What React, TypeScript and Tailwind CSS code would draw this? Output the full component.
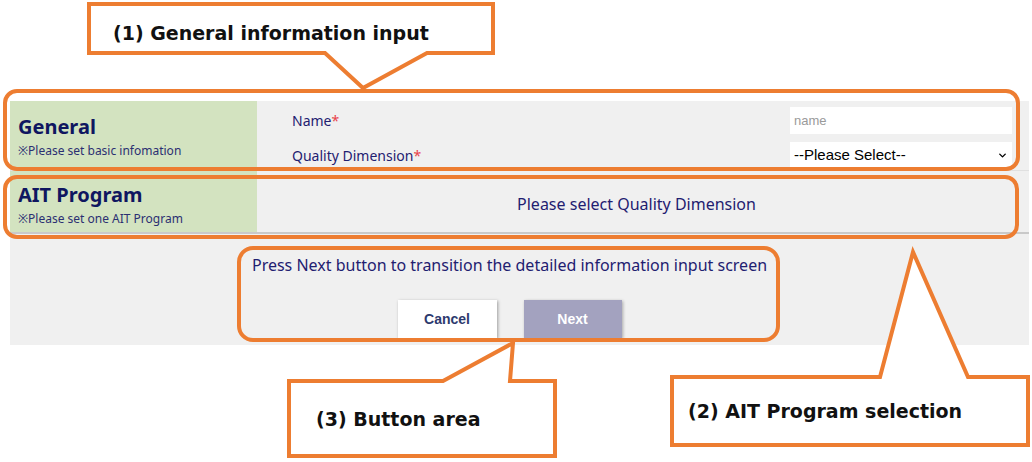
import { ChevronDown } from "lucide-react";

const orange = "#ed7d31";

function Callouts() {
  return (
    <>
      <svg className="pointer-events-none absolute left-0 top-0" width={1032} height={462} viewBox="0 0 1032 462">
        <g fill="none" stroke={orange} strokeWidth={4} strokeLinejoin="miter">
          <rect x={5} y={91} width={1013} height={78} rx={12} />
          <rect x={5} y={177} width={1012} height={60} rx={12} />
          <rect x={239} y={248} width={539} height={92} rx={14} />
        </g>
        <g fill="#ffffff" stroke={orange} strokeWidth={4}>
          <path d="M89 4 H493 V53 H427 L363 88 L325 53 H89 Z" />
          <path d="M289 381 H443 L513 343 L510 381 H555 V456 H289 Z" />
          <path d="M672 377 H880 L913 252 L968 377 H1028 V445 H672 Z" />
        </g>
      </svg>
      <p className="absolute left-[113px] top-[21px] font-['DejaVu_Sans',sans-serif] text-[19px] font-bold leading-[24px] text-[#111111]">
        (1) General information input
      </p>
      <p className="absolute left-[688px] top-[399px] font-['DejaVu_Sans',sans-serif] text-[19px] font-bold leading-[24px] text-[#111111]">
        (2) AIT Program selection
      </p>
      <p className="absolute left-[316px] top-[407px] font-['DejaVu_Sans',sans-serif] text-[19px] font-bold leading-[24px] text-[#111111]">
        (3) Button area
      </p>
    </>
  );
}

function SideLabel({ title, note, pad }: { title: string; note: string; pad: string }) {
  return (
    <div className={`flex w-[247px] shrink-0 flex-col bg-[#d3e3c0] px-2 ${pad}`}>
      <h2 className="text-[20px] font-bold leading-[26px] text-[#0f1660]">{title}</h2>
      <p className="mt-[2px] text-[12px] leading-[18px] text-[#2b2f72]">{note}</p>
    </div>
  );
}

export default function App() {
  return (
    <div className="relative h-[462px] w-[1032px] overflow-hidden bg-white font-['Noto_Sans',sans-serif]">
      <div className="ml-[10px] mt-[101px] w-[1019px] bg-[#f0f0f0] text-[#1f2070]">
        <section className="flex h-[70px] border-b border-[#e0e0e0]">
          <SideLabel title="General" note="※Please set basic infomation" pad="pt-[13px]" />
          <div className="grid flex-1 grid-cols-[1fr_222px] content-start gap-y-[8px] pl-[35px] pr-[17px] pt-[6px]">
            <label className="flex h-[27px] items-center text-[14px]">
              Name<span className="text-[#e8424a]">*</span>
            </label>
            <input
              placeholder="name"
              className="h-[27px] bg-white px-1 font-['Liberation_Sans',sans-serif] text-[13px] text-black outline-none placeholder:text-[#9a9a9a]"
            />
            <label className="flex h-[26px] items-center text-[14px]">
              Quality Dimension<span className="text-[#e8424a]">*</span>
            </label>
            <div className="relative h-[26px]">
              <select className="h-full w-full appearance-none bg-white px-1 font-['Liberation_Sans',sans-serif] text-[15px] text-black outline-none">
                <option>--Please Select--</option>
              </select>
              <ChevronDown className="pointer-events-none absolute right-[4px] top-[8px] text-black" size={11} strokeWidth={3} />
            </div>
          </div>
        </section>
        <section className="flex h-[63px] border-b-2 border-[#c9c9c9]">
          <SideLabel title="AIT Program" note="※Please set one AIT Program" pad="pt-[11px]" />
          <div className="flex flex-1 items-center justify-center pr-[13px] pt-[5px] text-[16px]">
            Please select Quality Dimension
          </div>
        </section>
        <section className="flex h-[111px] flex-col items-center pr-[20px] pt-[21px]">
          <p className="text-[16px] leading-[20px]">
            Press Next button to transition the detailed information input screen
          </p>
          <div className="mt-[25px] flex gap-[27px] font-['Liberation_Sans',sans-serif] text-[14px] font-bold">
            <button className="h-[38px] w-[99px] bg-white text-[#2d3a6e] shadow-[1px_1px_3px_rgba(0,0,0,0.35)]">
              Cancel
            </button>
            <button className="h-[38px] w-[98px] bg-[#a3a2bf] text-white shadow-[1px_1px_3px_rgba(0,0,0,0.3)]">
              Next
            </button>
          </div>
        </section>
      </div>
      <Callouts />
    </div>
  );
}
